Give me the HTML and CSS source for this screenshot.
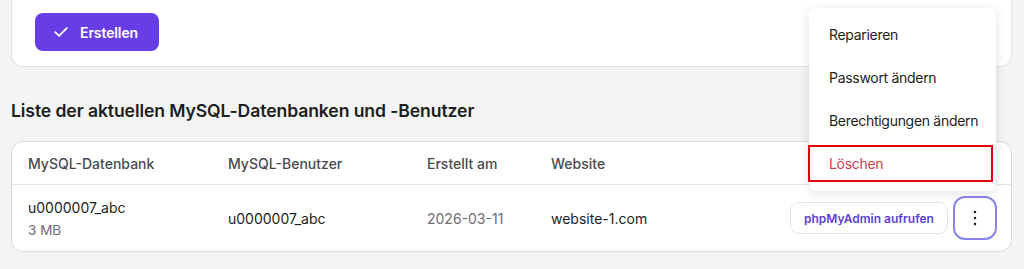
FILE: index.html
```html
<!DOCTYPE html>
<html lang="de">
<head>
<meta charset="utf-8">
<title>MySQL-Datenbanken</title>
<link rel="stylesheet" href="styles.css">
</head>
<body>
<div class="page">
  <section class="create-card">
    <button class="btn-primary" type="button">
      <svg class="check" width="14" height="10" viewBox="0 0 14 10"><path d="M1.2 5.2 L5 8.8 L12.8 1.2" fill="none" stroke="#fff" stroke-width="1.8" stroke-linecap="round" stroke-linejoin="round"/></svg>
      <span>Erstellen</span>
    </button>
  </section>

  <h2 class="title">Liste der aktuellen MySQL-Datenbanken und -Benutzer</h2>

  <section class="table-card">
    <div class="row head">
      <div class="cell">MySQL-Datenbank</div>
      <div class="cell">MySQL-Benutzer</div>
      <div class="cell">Erstellt am</div>
      <div class="cell">Website</div>
      <div class="cell"></div>
    </div>
    <div class="row body">
      <div class="cell db">
        <div class="db-name">u0000007_abc</div>
        <div class="db-size">3 MB</div>
      </div>
      <div class="cell">u0000007_abc</div>
      <div class="cell muted">2026-03-11</div>
      <div class="cell">website-1.com</div>
      <div class="cell actions">
        <button class="btn-outline" type="button">phpMyAdmin aufrufen</button>
        <button class="btn-kebab" type="button" aria-label="Mehr">
          <svg width="4" height="16" viewBox="0 0 4 16"><circle cx="2" cy="2" r="1.25" fill="#1d1e20"/><circle cx="2" cy="8" r="1.25" fill="#1d1e20"/><circle cx="2" cy="14" r="1.25" fill="#1d1e20"/></svg>
        </button>
      </div>
    </div>
  </section>
</div>

<ul class="menu">
  <li class="menu-item">Reparieren</li>
  <li class="menu-item">Passwort ändern</li>
  <li class="menu-item">Berechtigungen ändern</li>
  <li class="menu-item danger">Löschen</li>
</ul>
</body>
</html>
```

FILE: styles.css
```css
* { box-sizing: border-box; }
html, body { margin: 0; padding: 0; }
body {
  background: #f4f4f4;
  font-family: "Inter", "DejaVu Sans", sans-serif;
  color: #1d1e20;
  width: 1024px;
  height: 269px;
  overflow: hidden;
  position: relative;
}
.page {
  padding: 0 12px 0 11px;
}
.create-card {
  background: #fff;
  border: 1px solid #e3e3e3;
  border-top: none;
  border-radius: 0 0 12px 12px;
  padding: 13px 23px 15px;
  height: 67px;
}
.btn-primary {
  display: flex;
  align-items: center;
  gap: 12px;
  height: 38px;
  width: 124px;
  padding: 0 0 0 19px;
  border: none;
  border-radius: 8px;
  background: #673de6;
  color: #fff;
  font-family: inherit;
  font-size: 14px;
  font-weight: 600;
  letter-spacing: -0.1px;
}
.title {
  margin: 31px 0 17px;
  font-size: 17.6px;
  line-height: 26px;
  font-weight: 600;
  letter-spacing: -0.1px;
  color: #1d1e20;
}
.table-card {
  background: #fff;
  border: 1px solid #dadada;
  border-radius: 12px;
}
.row {
  display: grid;
  grid-template-columns: 200px 199px 124px 1fr auto;
  align-items: center;
  padding: 0 14px 0 16px;
}
.row.head {
  height: 43px;
  border-bottom: 1px solid #e6e6e6;
  font-size: 14px;
  font-weight: 500;
  color: #4a4a4f;
}
.row.body {
  height: 66px;
  font-size: 14px;
}
.db { display: flex; flex-direction: column; gap: 6px; padding-top: 0; }
.db-size { color: #6d6d72; font-size: 13.5px; }
.muted { color: #6d6d72; }
.actions {
  display: flex;
  align-items: center;
  gap: 5px;
}
.btn-outline {
  height: 32px;
  padding: 0;
  width: 158px;
  white-space: nowrap;
  text-align: center;
  border: 1px solid #e3e3e3;
  border-radius: 9px;
  background: #fff;
  color: #5b3fd4;
  font-family: inherit;
  font-size: 12px;
  font-weight: 600;
}
.btn-kebab {
  width: 44px;
  height: 44px;
  display: flex;
  align-items: center;
  justify-content: center;
  border: 2px solid #8b85ea;
  border-radius: 12px;
  background: #fff;
  padding: 0;
}
.menu {
  position: absolute;
  left: 809px;
  top: 8px;
  width: 187px;
  margin: 0;
  padding: 5px 0 6px;
  list-style: none;
  background: #fff;
  border-radius: 8px;
  box-shadow: 0 2px 12px rgba(0, 0, 0, 0.12);
}
.menu-item {
  position: relative;
  height: 43px;
  line-height: 43px;
  padding-left: 20px;
  font-size: 14px;
  letter-spacing: -0.3px;
  color: #1d1e20;
  white-space: nowrap;
}
.menu-item.danger { color: #c9404f; }
.menu-item.danger::after {
  content: "";
  position: absolute;
  left: -1px;
  right: 3px;
  top: 3px;
  bottom: 3px;
  border: 2px solid #e3000e;
}
```
